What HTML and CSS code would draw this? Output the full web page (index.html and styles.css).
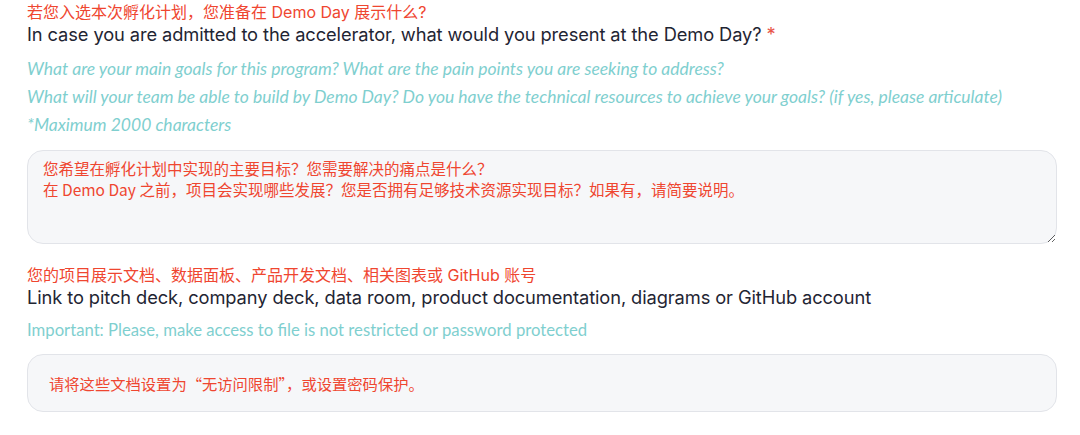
FILE: index.html
```html
<!DOCTYPE html>
<html lang="zh">
<head>
<meta charset="utf-8">
<link rel="stylesheet" href="styles.css">
</head>
<body>
<div class="form">
  <section class="field">
    <div class="cn-title">若您入选本次孵化计划，您准备在 Demo Day 展示什么?</div>
    <label class="question">In case you are admitted to the accelerator, what would you present at the Demo Day? <span class="req">*</span></label>
    <div class="hints">
      <p class="hint italic">What are your main goals for this program? What are the pain points you are seeking to address?</p>
      <p class="hint italic">What will your team be able to build by Demo Day? Do you have the technical resources to achieve your goals? (if yes, please articulate)</p>
      <p class="hint italic">*Maximum 2000 characters</p>
    </div>
    <textarea class="box area" readonly>您希望在孵化计划中实现的主要目标？您需要解决的痛点是什么？
在 Demo Day 之前，项目会实现哪些发展？您是否拥有足够技术资源实现目标？如果有，请简要说明。</textarea>
  </section>
  <section class="field second">
    <div class="cn-title">您的项目展示文档、数据面板、产品开发文档、相关图表或 GitHub 账号</div>
    <label class="question">Link to pitch deck, company deck, data room, product documentation, diagrams or GitHub account</label>
    <p class="hint plain">Important: Please, make access to file is not restricted or password protected</p>
    <div class="box input">请将这些文档设置为“无访问限制”，或设置密码保护。</div>
  </section>
</div>
</body>
</html>
```
FILE: styles.css
```css
html, body {
  margin: 0;
  padding: 0;
  background: #ffffff;
}
body {
  width: 1080px;
  height: 435px;
  overflow: hidden;
}
.form {
  padding: 3px 23px 0 27px;
  display: flex;
  flex-direction: column;
}
.field {
  display: flex;
  flex-direction: column;
}
.second {
  margin-top: 22px;
}
.cn-title {
  font-family: "Inter", "Noto Sans CJK SC", sans-serif;
  font-size: 16px;
  line-height: 19px;
  color: #ef4630;
}
.question {
  font-family: "Inter", "Noto Sans CJK SC", sans-serif;
  font-size: 18.3px;
  line-height: 24px;
  color: #1f2533;
  letter-spacing: -0.1px;
}
.req {
  color: #e8564a;
}
.hints {
  margin-top: 13px;
  display: flex;
  flex-direction: column;
  gap: 8px;
}
.hint {
  margin: 0;
  font-family: "Lato", sans-serif;
  font-size: 17.5px;
  line-height: 20px;
  color: #7fcfcf;
}
.italic {
  font-style: italic;
}
.plain {
  margin-top: 12px;
  font-size: 16.7px;
  line-height: 18px;
}
.box {
  box-sizing: border-box;
  width: 1030px;
  background: #f6f7f9;
  border: 1px solid #e2e4e9;
  border-radius: 16px;
  font-family: "Noto Sans CJK SC", sans-serif;
  color: #ef4630;
}
.area {
  margin-top: 15px;
  height: 94px;
  padding: 7px 15px;
  font-size: 15.5px;
  line-height: 20.5px;
  resize: vertical;
  outline: none;
  display: block;
}
.input {
  margin-top: 15px;
  height: 58px;
  padding: 0 21px;
  font-size: 15.3px;
  line-height: 20px;
  display: flex;
  align-items: center;
}
```
